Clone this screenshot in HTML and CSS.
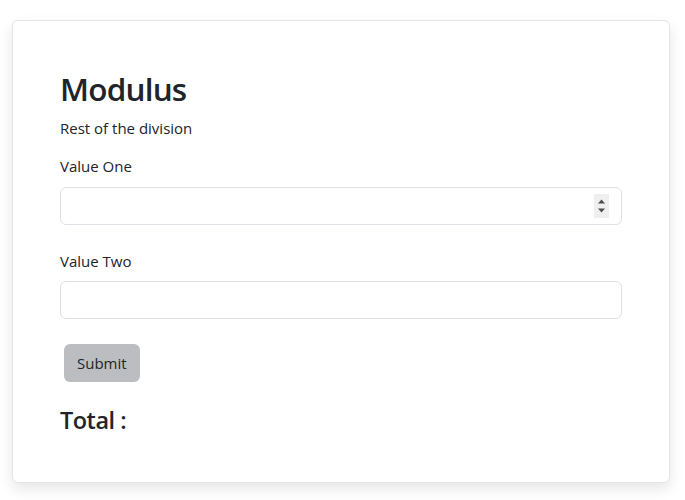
FILE: index.html
```html
<!DOCTYPE html>
<html lang="en">
<head>
<meta charset="utf-8">
<title>Modulus</title>
<link rel="stylesheet" href="styles.css">
</head>
<body>
<main class="page">
  <section class="card">
    <h1 class="title">Modulus</h1>
    <p class="subtitle">Rest of the division</p>
    <form class="form">
      <div class="field">
        <label class="label" for="v1">Value One</label>
        <div class="input-wrap">
          <input class="input" id="v1" type="number">
          <span class="spin" aria-hidden="true">
            <svg width="15" height="24" viewBox="0 0 15 24"><path d="M4 9.5 L7.5 5.5 L11 9.5 Z" fill="#4d4d4d"/><path d="M4 14.5 L7.5 18.5 L11 14.5 Z" fill="#4d4d4d"/></svg>
          </span>
        </div>
      </div>
      <div class="field">
        <label class="label" for="v2">Value Two</label>
        <input class="input" id="v2" type="number">
      </div>
      <div class="actions">
        <button class="btn" type="button">Submit</button>
      </div>
    </form>
    <h3 class="total">Total :</h3>
  </section>
</main>
</body>
</html>
```
FILE: styles.css
```css
* { box-sizing: border-box; }
html, body { margin: 0; padding: 0; background: #fff; }
body {
  font-family: "Open Sans", "Noto Sans", sans-serif;
  color: #212529;
  font-size: 15px;
  line-height: 1.5;
}
.page { padding: 20px 15px 18px 12px; }
.card {
  width: 658px;
  border: 1px solid #e3e4e7;
  border-radius: 6px;
  background: #fff;
  box-shadow: 0 6px 14px rgba(0,0,0,0.10);
  padding: 49px 47px 48px 47px;
}
.title {
  margin: 0 0 9px 0;
  font-size: 31.5px;
  font-weight: 600;
  letter-spacing: -0.8px;
  line-height: 1.2;
}
.subtitle { margin: 0 0 16px 0; }
.field { margin-bottom: 25px; }
.label { display: block; margin-bottom: 9px; }
.input-wrap { position: relative; }
.input {
  display: block;
  width: 100%;
  height: 38px;
  border: 1px solid #dee2e6;
  border-radius: 6px;
  padding: 6px 12px;
  font: inherit;
  color: #212529;
  background: #fff;
  -moz-appearance: textfield;
}
.input::-webkit-inner-spin-button,
.input::-webkit-outer-spin-button { -webkit-appearance: none; margin: 0; }
.spin {
  position: absolute;
  right: 13px;
  top: 7px;
  width: 15px;
  height: 24px;
  background: #efefef;
  display: flex;
}
.actions { padding-left: 4px; }
.btn {
  height: 38px;
  padding: 0 13px;
  border: 0;
  border-radius: 6px;
  background: #bbbdc1;
  color: #212529;
  font: inherit;
}
.total {
  margin: 24px 0 0 0;
  font-size: 23.5px;
  font-weight: 600;
  letter-spacing: -0.5px;
  line-height: 1.2;
}
```
